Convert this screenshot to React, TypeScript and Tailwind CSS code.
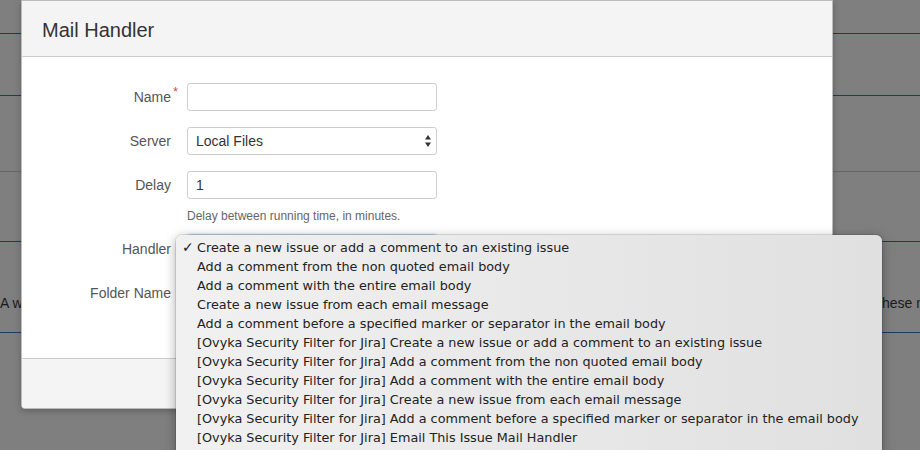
const handlers = [
  "Create a new issue or add a comment to an existing issue",
  "Add a comment from the non quoted email body",
  "Add a comment with the entire email body",
  "Create a new issue from each email message",
  "Add a comment before a specified marker or separator in the email body",
  "[Ovyka Security Filter for Jira] Create a new issue or add a comment to an existing issue",
  "[Ovyka Security Filter for Jira] Add a comment from the non quoted email body",
  "[Ovyka Security Filter for Jira] Add a comment with the entire email body",
  "[Ovyka Security Filter for Jira] Create a new issue from each email message",
  "[Ovyka Security Filter for Jira] Add a comment before a specified marker or separator in the email body",
  "[Ovyka Security Filter for Jira] Email This Issue Mail Handler",
];

function SelectArrows() {
  return (
    <svg width="8" height="14" viewBox="0 0 8 14" className="shrink-0">
      <path d="M4 1 L7 5.5 L1 5.5 Z" fill="#333" />
      <path d="M4 13 L7 8.5 L1 8.5 Z" fill="#333" />
    </svg>
  );
}

function Row({
  label,
  required,
  children,
}: {
  label: string;
  required?: boolean;
  children: React.ReactNode;
}) {
  return (
    <div className="flex items-start gap-4">
      <label className="relative w-[149px] shrink-0 text-right text-[14px] leading-[28px] text-[#555]">
        {label}
        {required && (
          <span className="absolute -right-[7px] -top-[5px] text-[12px] text-[#d04437]">*</span>
        )}
      </label>
      <div className="w-[250px]">{children}</div>
    </div>
  );
}

export default function App() {
  return (
    <div
      className="relative h-[450px] w-[920px] overflow-hidden bg-[#7f7f7f] text-[#1a1a1a]"
      style={{ fontFamily: '"Liberation Sans", Arial, sans-serif' }}
    >
      {/* dimmed page behind the dialog */}
      <div className="flex flex-col">
        <div className="h-[34px] border-b border-[#1e3a5f]" />
        <div className="h-[62px] border-b border-[#1e3a5f]" />
        <div className="h-[76px] border-b border-[#666]" />
        <div className="h-[70px] border-b border-[#1e3a5f]" />
        <div className="flex h-[91px] items-start whitespace-nowrap border-b border-[#1e3a5f] pt-[51px] text-[14px]">
          <span className="w-[878px] shrink-0 overflow-hidden">A webhook is used to receive the mails</span>
          <span>these messages will</span>
        </div>
      </div>

      {/* dialog */}
      <div className="absolute left-[21px] top-0 w-[812px] overflow-hidden rounded-b-[4px] border border-[#bbb] bg-white shadow-[0_2px_6px_rgba(0,0,0,0.25)]">
        <div className="flex h-[56px] items-center border-b border-[#ccc] bg-[#f4f4f4] px-5 pt-[3px]">
          <h2 className="text-[20px] text-[#333]">Mail Handler</h2>
        </div>
        <div className="flex h-[301px] flex-col gap-4 pt-[26px]">
          <Row label="Name" required>
            <div className="h-[28px] rounded-[3px] border border-[#ccc] bg-white" />
          </Row>
          <Row label="Server">
            <div className="flex h-[28px] items-center justify-between rounded-[3px] border border-[#ccc] bg-white pl-2 pr-[4px] text-[14px] text-[#333]">
              <span>Local Files</span>
              <SelectArrows />
            </div>
          </Row>
          <Row label="Delay">
            <div className="flex h-[28px] items-center rounded-[3px] border border-[#ccc] bg-white pl-2 text-[14px] text-[#333]">
              1
            </div>
            <p className="mt-[8px] text-[12px] text-[#666]">Delay between running time, in minutes.</p>
          </Row>
          <div className="-mt-[6px] flex flex-col gap-4">
            <Row label="Handler">
              <div className="h-[28px] rounded-[3px] border border-[#5b9dd9] bg-white shadow-[0_0_3px_#5b9dd9]" />
            </Row>
            <Row label="Folder Name">
              <div className="h-[28px] rounded-[3px] border border-[#ccc] bg-white" />
            </Row>
          </div>
        </div>
        <div className="h-[50px] border-t border-[#ccc] bg-[#f4f4f4]" />
      </div>

      {/* open native popup menu */}
      <div
        className="absolute left-[176px] top-[235px] w-[706px] rounded-[6px] bg-gradient-to-r from-[#f1f1f1] to-[#e0e0e0] pb-2 pt-[3px] text-[#222] shadow-[0_3px_12px_rgba(0,0,0,0.35)] ring-1 ring-black/10"
        style={{ fontFamily: '"DejaVu Sans", "Liberation Sans", sans-serif' }}
      >
        {handlers.map((h, i) => (
          <div key={i} className="relative h-[19px] whitespace-nowrap pl-[21px] text-[12.8px] leading-[19px]">
            {i === 0 && <span className="absolute left-[6px] top-0 text-[14px] font-bold">✓</span>}
            {h}
          </div>
        ))}
      </div>
    </div>
  );
}
